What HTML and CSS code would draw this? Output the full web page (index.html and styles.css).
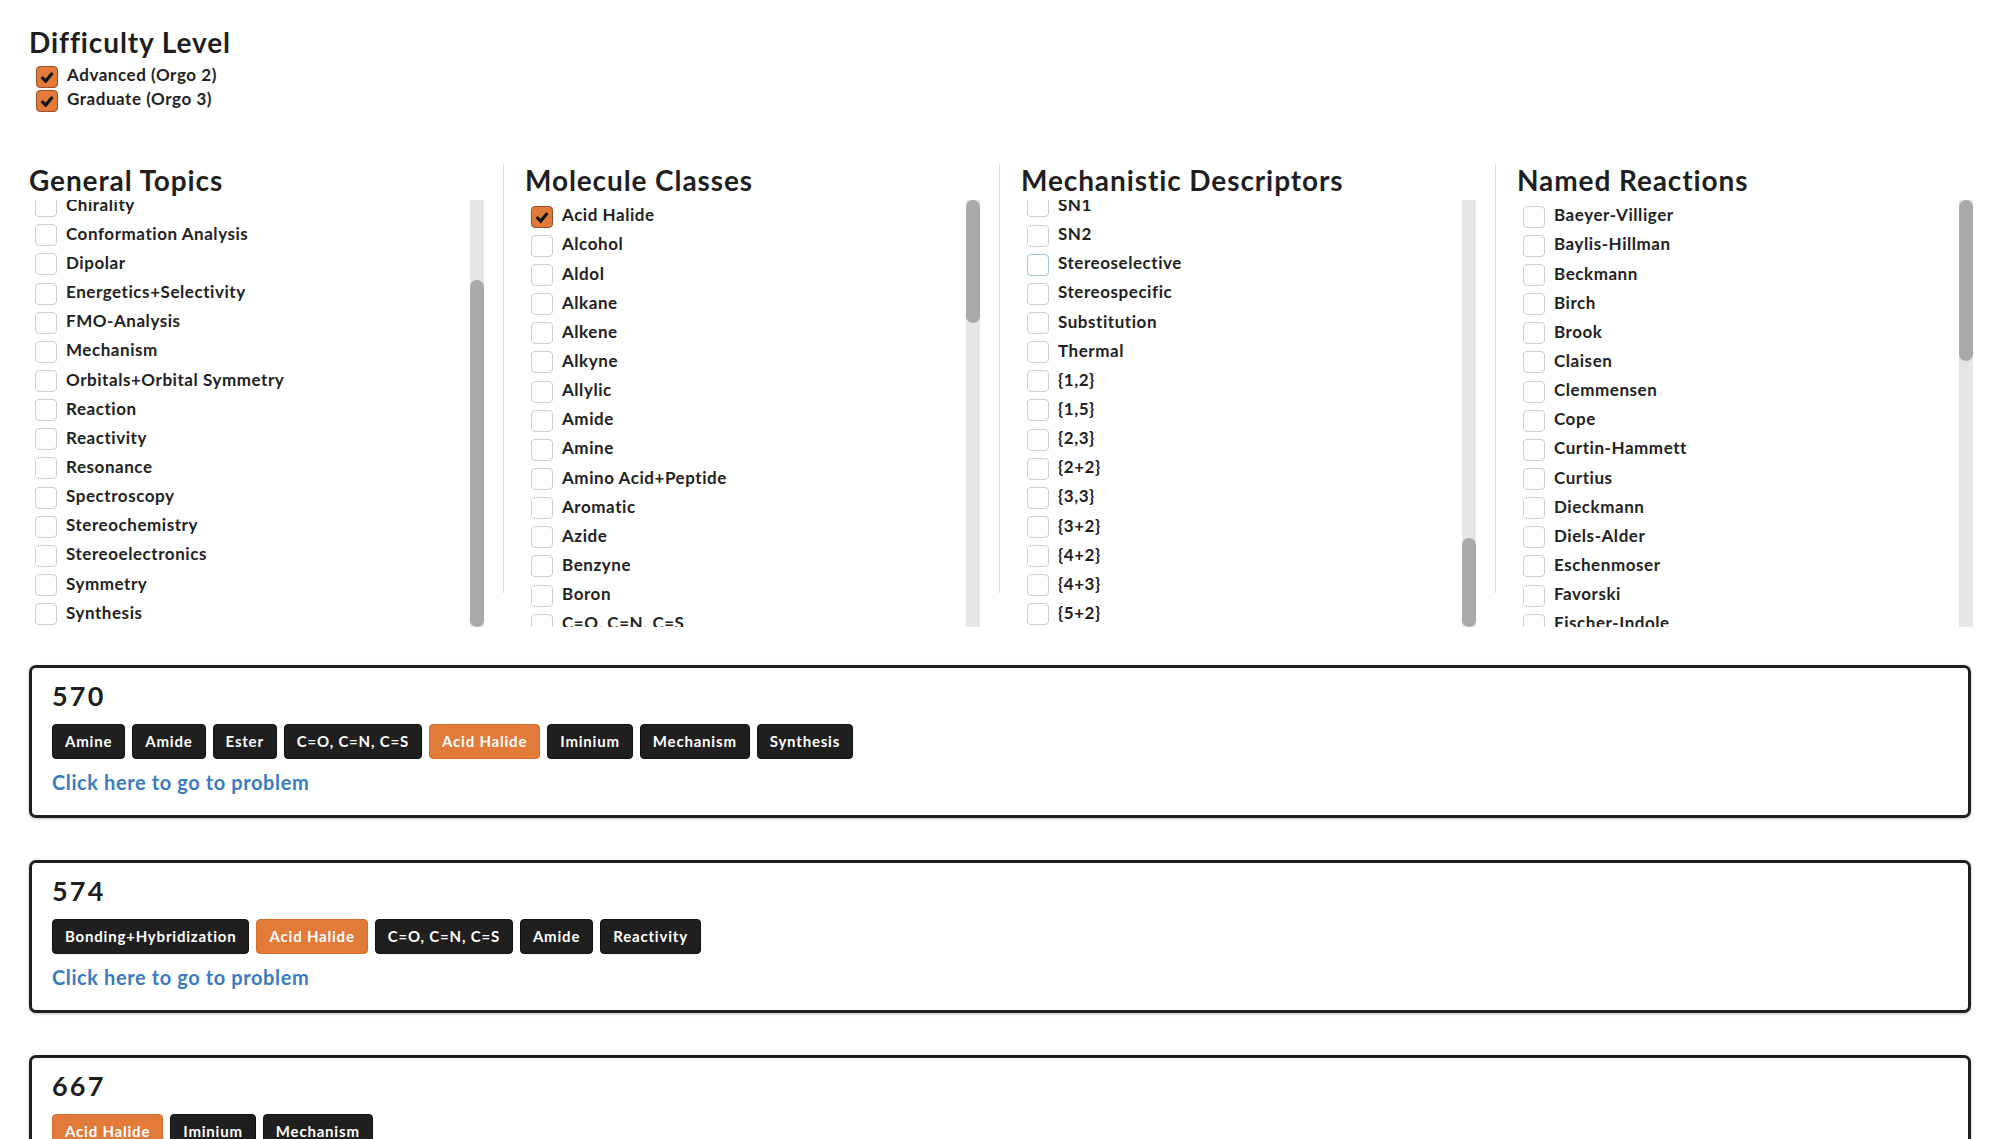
FILE: index.html
```html
<!DOCTYPE html>
<html lang="en">
<head>
    <meta charset="UTF-8">
    <meta name="viewport" content="width=device-width, initial-scale=1.0">
    <title>Problem Finder</title>
    <link rel="stylesheet" href="styles.css">
</head>
<body>
    <div class="difficulty">
        <h2>Difficulty Level</h2>
        <div class="difficulty-list">
            <label class="check"><span class="box checked"><svg viewBox="0 0 22 22"><polyline points="5,11 9.5,15.5 17,6.5"/></svg></span>Advanced (Orgo 2)</label>
            <label class="check"><span class="box checked"><svg viewBox="0 0 22 22"><polyline points="5,11 9.5,15.5 17,6.5"/></svg></span>Graduate (Orgo 3)</label>
        </div>
    </div>

    <div class="filters">
        <div class="filter-col">
            <h2>General Topics</h2>
            <div class="filter-body">
                <div class="filter-list" id="general"></div>
                <div class="scroll-track"><div class="scroll-thumb"></div></div>
            </div>
        </div>
        <div class="filter-col">
            <h2>Molecule Classes</h2>
            <div class="filter-body">
                <div class="filter-list" id="molecules"></div>
                <div class="scroll-track"><div class="scroll-thumb"></div></div>
            </div>
        </div>
        <div class="filter-col">
            <h2>Mechanistic Descriptors</h2>
            <div class="filter-body">
                <div class="filter-list" id="mechanistic"></div>
                <div class="scroll-track"><div class="scroll-thumb"></div></div>
            </div>
        </div>
        <div class="filter-col">
            <h2>Named Reactions</h2>
            <div class="filter-body">
                <div class="filter-list" id="named"></div>
                <div class="scroll-track"><div class="scroll-thumb"></div></div>
            </div>
        </div>
    </div>

    <div class="results">
        <div class="problem-card">
            <h3>570</h3>
            <div class="tags">
                <span class="tag">Amine</span>
                <span class="tag">Amide</span>
                <span class="tag">Ester</span>
                <span class="tag">C=O, C=N, C=S</span>
                <span class="tag selected">Acid Halide</span>
                <span class="tag">Iminium</span>
                <span class="tag">Mechanism</span>
                <span class="tag">Synthesis</span>
            </div>
            <a class="problem-link" href="#">Click here to go to problem</a>
        </div>
        <div class="problem-card">
            <h3>574</h3>
            <div class="tags">
                <span class="tag">Bonding+Hybridization</span>
                <span class="tag selected">Acid Halide</span>
                <span class="tag">C=O, C=N, C=S</span>
                <span class="tag">Amide</span>
                <span class="tag">Reactivity</span>
            </div>
            <a class="problem-link" href="#">Click here to go to problem</a>
        </div>
        <div class="problem-card">
            <h3>667</h3>
            <div class="tags">
                <span class="tag selected">Acid Halide</span>
                <span class="tag">Iminium</span>
                <span class="tag">Mechanism</span>
            </div>
            <a class="problem-link" href="#">Click here to go to problem</a>
        </div>
    </div>

    <script>
        const filters = {
            general: ['Acid+Base', 'Aromaticity', 'Bonding+Hybridization', 'Chirality', 'Conformation Analysis', 'Dipolar',
                'Energetics+Selectivity', 'FMO-Analysis', 'Mechanism', 'Orbitals+Orbital Symmetry', 'Reaction',
                'Reactivity', 'Resonance', 'Spectroscopy', 'Stereochemistry', 'Stereoelectronics', 'Symmetry', 'Synthesis'],
            molecules: ['Acid Halide', 'Alcohol', 'Aldol', 'Alkane', 'Alkene', 'Alkyne', 'Allylic', 'Amide', 'Amine',
                'Amino Acid+Peptide', 'Aromatic', 'Azide', 'Benzyne', 'Boron', 'C=O, C=N, C=S', 'Carbene',
                'Carbocation', 'Carbohydrate', 'Carboxylic Acid', 'Diene', 'Enamine', 'Enol', 'Enolate', 'Epoxide',
                'Ester', 'Ether', 'Halide', 'Heterocycle', 'Hydrazine', 'Imine', 'Iminium', 'Ketene', 'Lactam',
                'Lactone', 'Metal', 'Nitrene', 'Nitrile', 'Nitro', 'Organocuprate', 'Organolithium', 'Organomagnesium',
                'Oxime', 'Peroxide', 'Phosphorus', 'Radical', 'Selenium', 'Silicon', 'Sulfonate', 'Sulfur', 'Thiol', 'Ylide'],
            mechanistic: ['Acid-Catalyzed', 'Addition', 'Alkylation', 'Anionic', 'Anti', 'Anti-Markovnikov',
                'Aromatic Substitution', 'Base-Catalyzed', 'Carbene', 'Carbocation', 'Catalysis', 'Cationic',
                'Chelotropic', 'Concerted', 'Condensation', 'Conjugate Addition', 'Conrotatory', 'Coupling',
                'Cyclization', 'Cycloaddition', 'Decarboxylation', 'Dehydration', 'Disrotatory', 'E1', 'E1cB', 'E2',
                'Electrocyclic', 'Electrophilic', 'Elimination', 'Ene', 'Enolate', 'Epoxidation', 'Fragmentation',
                'Group Transfer', 'Halogenation', 'Hydration', 'Hydride Shift', 'Hydrolysis', 'Intramolecular', 'Ionic',
                'Kinetic Control', 'Markovnikov', 'Metathesis', 'Migration', 'Nucleophilic', 'Olefination', 'Oxidation',
                'Pericyclic', 'Photochemical', 'Radical', 'Rearrangement', 'Reduction', 'Regioselective',
                'Ring Opening', 'Sigmatropic', 'SN1', 'SN2', 'Stereoselective', 'Stereospecific', 'Substitution',
                'Thermal', '{1,2}', '{1,5}', '{2,3}', '{2+2}', '{3,3}', '{3+2}', '{4+2}', '{4+3}', '{5+2}'],
            named: ['Baeyer-Villiger', 'Baylis-Hillman', 'Beckmann', 'Birch', 'Brook', 'Claisen', 'Clemmensen', 'Cope',
                'Curtin-Hammett', 'Curtius', 'Dieckmann', 'Diels-Alder', 'Eschenmoser', 'Favorski',
                'Fischer-Indole', 'Friedel-Crafts', 'Grignard', 'Heck', 'Hofmann', 'Horner-Wadsworth-Emmons', 'Mannich',
                'Michael', 'Mitsunobu', 'Nazarov', 'Pinacol', 'Prins', 'Ritter', 'Robinson', 'Shapiro', 'Sharpless',
                'Stille', 'Suzuki', 'Swern', 'Wacker', 'Wagner-Meerwein', 'Wittig', 'Wolff', 'Wolff-Kishner', 'Woodward-Hoffmann']
        };

        const selected = ['Acid Halide'];
        const focused = 'Stereoselective';
        const scrolledToEnd = ['general', 'mechanistic'];
        const checkSvg = '<svg viewBox="0 0 22 22"><polyline points="5,11 9.5,15.5 17,6.5"/></svg>';

        for (const id in filters) {
            const list = document.getElementById(id);
            filters[id].forEach(function (name) {
                const label = document.createElement('label');
                label.className = 'check';
                const box = document.createElement('span');
                box.className = 'box';
                if (id === 'molecules' && selected.includes(name)) {
                    box.classList.add('checked');
                    box.innerHTML = checkSvg;
                }
                if (name === focused) box.classList.add('focused');
                label.appendChild(box);
                label.appendChild(document.createTextNode(name));
                list.appendChild(label);
            });

            if (scrolledToEnd.includes(id)) {
                list.scrollTop = list.scrollHeight;
            }

            // size the scrollbar thumb from the list's scroll state
            const track = list.nextElementSibling;
            const thumb = track.firstElementChild;
            const trackHeight = track.clientHeight;
            thumb.style.height = (trackHeight * list.clientHeight / list.scrollHeight) + 'px';
            thumb.style.top = (trackHeight * list.scrollTop / list.scrollHeight) + 'px';
        }
    </script>
</body>
</html>
```

FILE: styles.css
```css
body {
    margin: 8px;
    font-family: 'Lato', 'Noto Sans', sans-serif;
    color: #222;
    background: #fff;
}

h2 {
    margin: 0;
    font-size: 28px;
    line-height: 1.2;
    font-weight: 700;
    letter-spacing: 0.9px;
    color: #1f1f1f;
}

.difficulty {
    padding: 18px 21px 0;
}

.difficulty-list {
    margin-top: 3px;
    padding-left: 7px;
}

.difficulty-list .check {
    height: 24px;
}

.check {
    display: flex;
    align-items: center;
    gap: 9px;
    font-size: 17px;
    font-weight: 700;
    letter-spacing: 0.55px;
    color: #222;
    white-space: nowrap;
    cursor: pointer;
}

.box {
    flex: none;
    width: 22px;
    height: 22px;
    margin-top: 4px;
    box-sizing: border-box;
    border: 1px solid #cdcdcd;
    border-radius: 4px;
    background: #fff;
}

.box.checked {
    background: #e27a39;
    border-color: #99502a;
}

.box.focused {
    border-color: #9dc3de;
}

.box svg {
    display: block;
    width: 20px;
    height: 20px;
    fill: none;
    stroke: #141414;
    stroke-width: 3.4;
}

.filters {
    display: flex;
    margin-top: 53px;
}

.filter-col {
    width: 25%;
    height: 429px;
    box-sizing: border-box;
    padding: 0 19px 0 21px;
    border-right: 1px solid #dedede;
}

.filter-col:last-child {
    border-right: none;
}

.filter-body {
    display: flex;
    height: 427px;
    margin-top: 3px;
}

.filter-list {
    flex: 1;
    padding-left: 6px;
    overflow: hidden;
}

.filter-list .check {
    height: 29.15px;
}

.scroll-track {
    position: relative;
    flex: none;
    width: 14px;
    background: #e6e6e6;
}

.scroll-thumb {
    position: absolute;
    left: 0;
    right: 0;
    border-radius: 7px;
    background: #a9a9a9;
}

.results {
    margin-top: 72px;
    padding: 0 21px;
}

.problem-card {
    height: 153px;
    box-sizing: border-box;
    margin-bottom: 42px;
    padding: 12px 20px 21px;
    border: 3px solid #1e1e1e;
    border-radius: 7px;
    box-shadow: 0 1px 3px rgba(0,0,0,0.25);
    background: #fff;
}

.problem-card h3 {
    margin: 0;
    font-size: 27px;
    line-height: 1.15;
    font-weight: 700;
    letter-spacing: 2.2px;
    color: #1f1f1f;
}

.tags {
    display: flex;
    gap: 7px;
    margin-top: 13px;
}

.tag {
    height: 35px;
    box-sizing: border-box;
    padding: 0 12px;
    display: flex;
    align-items: center;
    font-size: 15px;
    font-weight: 700;
    letter-spacing: 0.8px;
    color: #fff;
    background: #1f1f1f;
    border: 1px solid #111;
    border-radius: 4px;
}

.tag.selected {
    background: #e27a39;
    border-color: #d86d2b;
}

.problem-link {
    display: inline-block;
    margin-top: 11px;
    font-size: 20px;
    line-height: 1.2;
    font-weight: 700;
    letter-spacing: 0.6px;
    color: #3b7bbf;
    text-decoration: none;
}
```
